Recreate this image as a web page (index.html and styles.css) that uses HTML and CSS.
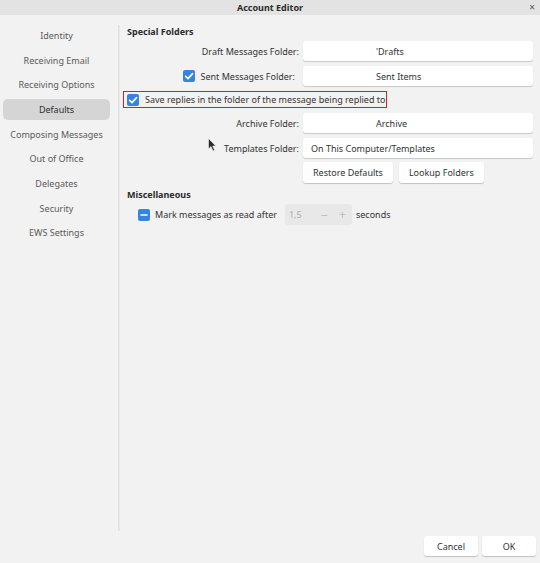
FILE: index.html
```html
<!DOCTYPE html>
<html>
<head>
<meta charset="utf-8">
<link rel="stylesheet" href="styles.css">
</head>
<body>
<div class="window">
  <div class="titlebar">
    <span class="title">Account Editor</span>
    <span class="close">×</span>
  </div>
  <div class="main">
    <nav class="sidebar">
      <div class="nav-item">Identity</div>
      <div class="nav-item">Receiving Email</div>
      <div class="nav-item">Receiving Options</div>
      <div class="nav-item selected">Defaults</div>
      <div class="nav-item">Composing Messages</div>
      <div class="nav-item">Out of Office</div>
      <div class="nav-item">Delegates</div>
      <div class="nav-item">Security</div>
      <div class="nav-item">EWS Settings</div>
    </nav>
    <div class="sep"></div>
    <section class="content">
      <h2 class="heading">Special Folders</h2>
      <div class="folders">
        <div class="label">Draft Messages Folder:</div>
        <div class="field offset">'Drafts</div>

        <div class="label sent"><span class="check checked"><svg viewBox="0 0 12 12"><path d="M2.6 6.2 L5 8.6 L9.6 3.6" fill="none" stroke="#fff" stroke-width="1.6" stroke-linecap="round" stroke-linejoin="round"/></svg></span>Sent Messages Folder:</div>
        <div class="field offset">Sent Items</div>

        <div class="save-row">
          <span class="check checked"><svg viewBox="0 0 12 12"><path d="M2.6 6.2 L5 8.6 L9.6 3.6" fill="none" stroke="#fff" stroke-width="1.6" stroke-linecap="round" stroke-linejoin="round"/></svg></span>
          <span>Save replies in the folder of the message being replied to</span>
        </div>

        <div class="label">Archive Folder:</div>
        <div class="field offset">Archive</div>

        <div class="label">Templates Folder:</div>
        <div class="field">On This Computer/Templates</div>

        <div></div>
        <div class="buttons">
          <button class="btn">Restore Defaults</button>
          <button class="btn">Lookup Folders</button>
        </div>
      </div>

      <h2 class="heading misc">Miscellaneous</h2>
      <div class="mark-row">
        <span class="check mixed"><svg viewBox="0 0 12 12"><path d="M3 6 H9" stroke="#fff" stroke-width="1.6" stroke-linecap="round"/></svg></span>
        <span class="mark-label">Mark messages as read after</span>
        <span class="spin">
          <span class="spin-value">1,5</span>
          <span class="spin-btn">−</span>
          <span class="spin-btn">+</span>
        </span>
        <span>seconds</span>
      </div>
    </section>
  </div>
  <div class="footer">
    <button class="btn dlg">Cancel</button>
    <button class="btn dlg">OK</button>
  </div>
  <svg class="cursor" viewBox="0 0 8 14" width="8" height="14"><path d="M0.5 0.5 L0.5 11 L3 8.6 L5 13 L6.6 12.3 L4.7 8 L7.8 8 Z" fill="#2b2b2b" stroke="#f4f4f4" stroke-width="0.6"/></svg>
</div>
</body>
</html>
```
FILE: styles.css
```css
* { box-sizing: border-box; }
html, body {
  margin: 0;
  padding: 0;
}
body {
  width: 540px;
  height: 563px;
  background: #f2f2f2;
  font-family: "Noto Sans", "Open Sans", sans-serif;
  font-size: 9px;
  color: #2e3436;
  overflow: hidden;
}
.window {
  position: relative;
  width: 540px;
  height: 563px;
  display: flex;
  flex-direction: column;
}
.titlebar {
  height: 15px;
  background: #e3e3e3;
  display: flex;
  align-items: center;
  justify-content: center;
  position: relative;
  flex: none;
}
.title {
  font-weight: bold;
  font-size: 9px;
  color: #2b2b2b;
}
.close {
  position: absolute;
  right: 5px;
  top: 0;
  line-height: 15px;
  font-size: 10px;
  color: #555;
}
.main {
  flex: 1;
  display: flex;
  min-height: 0;
}
.sidebar {
  width: 118px;
  flex: none;
  padding: 10px 0 0 3px;
}
.nav-item {
  width: 107px;
  height: 20.7px;
  margin-bottom: 4px;
  display: flex;
  align-items: center;
  justify-content: center;
  color: #5a5a5a;
  font-size: 9px;
  border-radius: 5px;
}
.nav-item.selected {
  background: #d5d5d5;
  color: #2e2e2e;
}
.sep {
  width: 2px;
  background: linear-gradient(to right, #dcdcdc, #ebebeb);
  margin: 10px 0 0 0;
  flex: none;
  height: 506px;
}
.content {
  flex: 1;
  padding: 0 7px 0 7px;
}
.heading {
  font-size: 9px;
  font-weight: bold;
  margin: 0;
  height: 14px;
  line-height: 14px;
  color: #2b2b2b;
}
.content > .heading:first-child {
  margin-top: 10px;
}
.folders {
  display: grid;
  grid-template-columns: 172px 230px;
  grid-template-rows: 20px 20px 17px 20px 20px 21px;
  column-gap: 4px;
  row-gap: 5px;
  margin-top: 2px;
}
.label {
  display: flex;
  align-items: center;
  justify-content: flex-end;
  gap: 4px;
  color: #333;
}
.label.sent {
  padding-right: 4px;
  gap: 5px;
}
.field {
  background: #fff;
  border-radius: 3px;
  box-shadow: 0 1px 1px rgba(0,0,0,0.18);
  display: flex;
  align-items: center;
  padding-left: 8px;
  color: #2e3436;
}
.field.offset {
  padding-left: 73px;
}
.check {
  width: 12px;
  height: 12px;
  border-radius: 2px;
  background: #3584e4;
  display: inline-flex;
  flex: none;
}
.check svg {
  width: 12px;
  height: 12px;
}
.save-row {
  grid-column: 1 / 3;
  margin-left: -4px;
  width: 264px;
  border: 1px solid #d21f2d;
  display: flex;
  align-items: center;
  gap: 6px;
  padding-left: 3px;
  color: #333;
  white-space: nowrap;
}
.buttons {
  display: flex;
  gap: 6px;
  margin-top: -1px;
}
.btn {
  font-family: inherit;
  font-size: 9px;
  color: #2e3436;
  background: #fff;
  border: none;
  border-radius: 3px;
  box-shadow: 0 1px 1px rgba(0,0,0,0.2);
  padding: 0 10px;
  height: 21px;
}
.misc {
  margin-top: 4px;
}
.mark-row {
  display: flex;
  align-items: center;
  margin-top: 2px;
  margin-left: 11px;
  height: 21px;
  color: #333;
}
.mark-row .check {
  margin-right: 5px;
}
.mark-label {
  margin-right: 8px;
}
.spin {
  width: 67px;
  height: 21px;
  background: #e8e8e8;
  border-radius: 3px;
  display: flex;
  align-items: center;
  margin-right: 4px;
  color: #ababab;
}
.spin-value {
  width: 30px;
  padding-left: 4px;
}
.spin-btn {
  width: 19px;
  text-align: center;
  font-size: 13px;
  font-weight: 300;
  color: #b0b0b0;
}
.footer {
  height: 32px;
  flex: none;
  display: flex;
  justify-content: flex-end;
  align-items: flex-start;
  gap: 4px;
  padding: 5px 4px 0 0;
}
.btn.dlg {
  width: 54px;
  height: 20px;
  padding: 0;
}
.cursor {
  position: absolute;
  left: 208px;
  top: 138px;
}
```
